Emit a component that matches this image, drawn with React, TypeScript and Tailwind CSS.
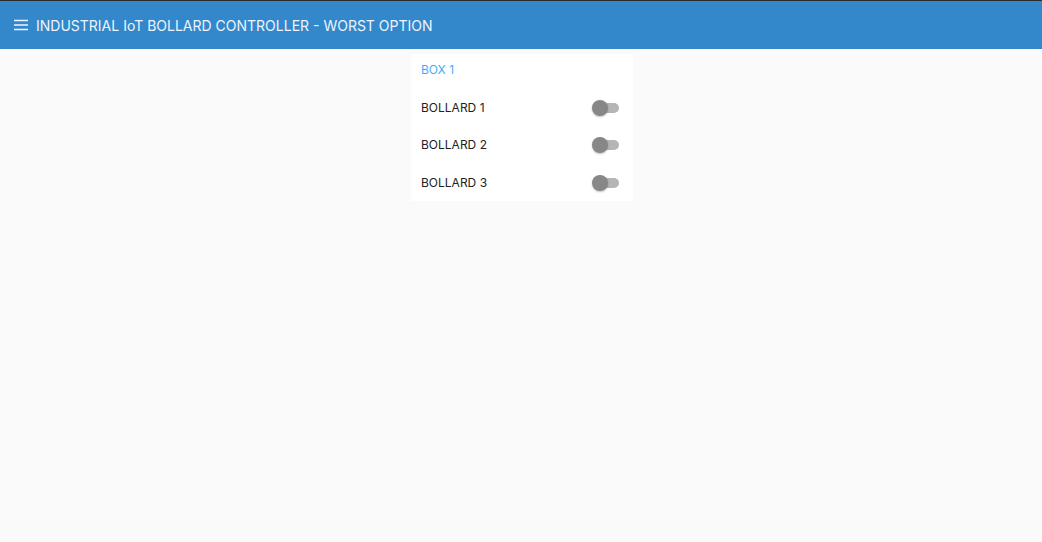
import React from "react";

const bollards = ["BOLLARD 1", "BOLLARD 2", "BOLLARD 3"];

function Toggle() {
  return (
    <div className="relative h-4 w-[28px]">
      <div className="absolute left-[3px] top-[3px] h-[10px] w-[24px] rounded-full bg-[#b5b5b5]" />
      <div className="absolute left-0 top-0 h-4 w-4 rounded-full bg-[#878787] shadow-[0_1px_2px_rgba(0,0,0,0.25)]" />
    </div>
  );
}

export default function App() {
  return (
    <div className="min-h-[542px] bg-[#fafafa] font-['Inter',sans-serif]">
      <header className="h-[49px] border-t border-[#2b2b2b] bg-[#3388cc] flex items-center px-[13px] gap-[7px] text-[#eef4fb]">
        <svg width="16" height="16" viewBox="0 0 16 16" className="shrink-0">
          <path d="M1 3.5h14M1 8h14M1 12.5h14" stroke="#eef4fb" strokeWidth="1.6" />
        </svg>
        <span className="text-[14px]">INDUSTRIAL IoT BOLLARD CONTROLLER - WORST OPTION</span>
      </header>
      <div className="flex justify-center pt-[5px] pl-[2px]">
        <div className="w-[222px] bg-white">
          <div className="h-[30px] mb-[4px] pt-[1px] flex items-center px-[10px] text-[12px] text-[#44adfa]">BOX 1</div>
          {bollards.map((b) => (
            <div key={b} className="h-[37.5px] pt-[1.5px] flex items-center justify-between px-[10px] pr-[13px] text-[12px] text-[#222]">
              <span>{b}</span>
              <Toggle />
            </div>
          ))}
        </div>
      </div>
    </div>
  );
}
